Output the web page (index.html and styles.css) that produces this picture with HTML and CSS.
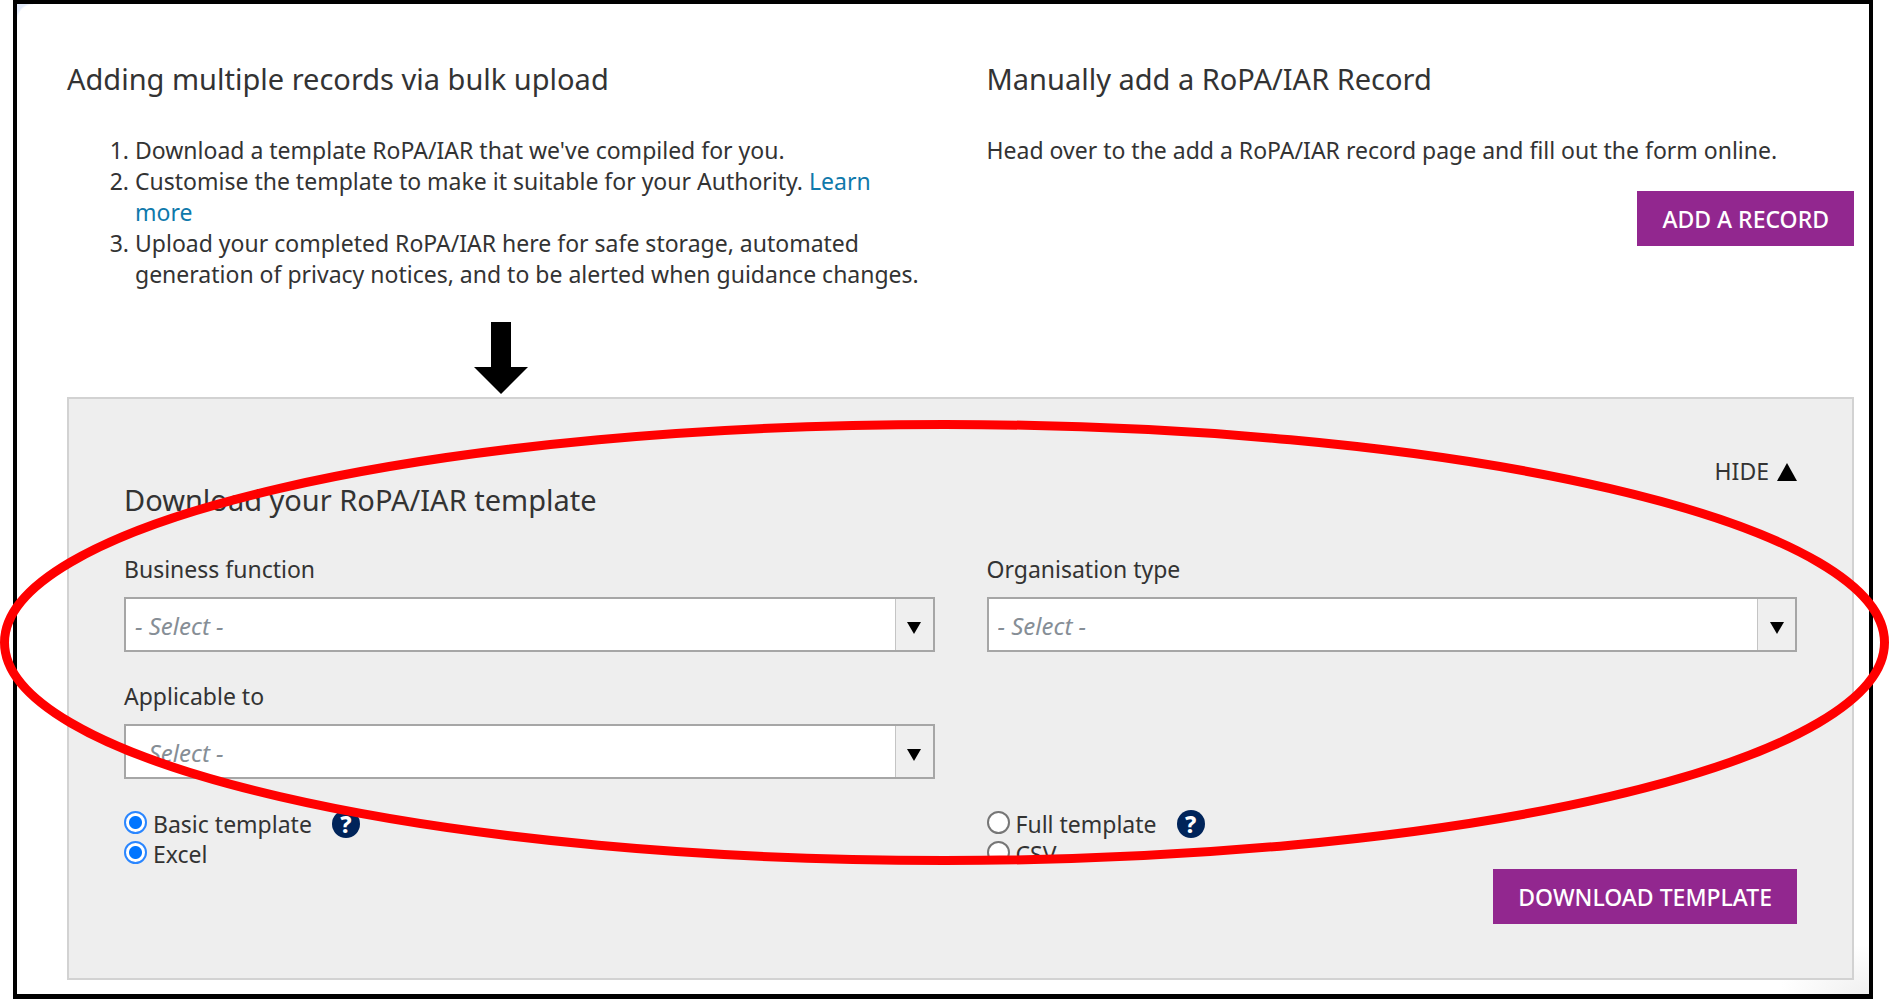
FILE: index.html
```html
<!DOCTYPE html>
<html lang="en">
	<head>
		<meta charset="UTF-8">
		<meta name="viewport" content="width=device-width, initial-scale=1.0">
		<title>Add RoPA/IAR records</title>
		<link rel="stylesheet" href="styles.css">
	</head>

	<body>
		<div class="frame">
			<div class="columns">
				<div class="bulk">
					<h2>Adding multiple records via bulk upload</h2>
					<ol>
						<li>Download a template RoPA/IAR that we've compiled for you.</li>
						<li>Customise the template to make it suitable for your Authority. <a href="#">Learn more</a></li>
						<li>Upload your completed RoPA/IAR here for safe storage, automated generation of privacy notices, and to be alerted when guidance changes.</li>
					</ol>
					<svg class="down-arrow" viewBox="0 0 54 72" aria-hidden="true">
						<path d="M17 0h20v45h17L27 72 0 45h17z"/>
					</svg>
				</div>
				<div class="manual">
					<h2>Manually add a RoPA/IAR Record</h2>
					<p>Head over to the add a RoPA/IAR record page and fill out the form online.</p>
					<button type="button" class="btn">ADD A RECORD</button>
				</div>
			</div>

			<form class="panel">
				<div class="panel-head">
					<h2>Download your RoPA/IAR template</h2>
					<button type="button" class="hide">HIDE
						<svg viewBox="0 0 20 18" aria-hidden="true"><path d="M10 0l10 18H0z"/></svg>
					</button>
				</div>

				<div class="columns fields">
					<div class="field">
						<label for="business">Business function</label>
						<div class="select-box">
							<select id="business"><option>- Select -</option></select>
							<span class="caret"><svg viewBox="0 0 14 12" aria-hidden="true"><path d="M0 0h14L7 12z"/></svg></span>
						</div>
					</div>
					<div class="field">
						<label for="organisation">Organisation type</label>
						<div class="select-box">
							<select id="organisation"><option>- Select -</option></select>
							<span class="caret"><svg viewBox="0 0 14 12" aria-hidden="true"><path d="M0 0h14L7 12z"/></svg></span>
						</div>
					</div>
					<div class="field">
						<label for="applicable">Applicable to</label>
						<div class="select-box">
							<select id="applicable"><option>- Select -</option></select>
							<span class="caret"><svg viewBox="0 0 14 12" aria-hidden="true"><path d="M0 0h14L7 12z"/></svg></span>
						</div>
					</div>
				</div>

				<div class="columns radios">
					<div class="radio">
						<input type="radio" name="template" id="basic" checked>
						<label for="basic">Basic template</label>
						<button type="button" class="help" aria-label="About the basic template">?</button>
					</div>
					<div class="radio">
						<input type="radio" name="template" id="full">
						<label for="full">Full template</label>
						<button type="button" class="help" aria-label="About the full template">?</button>
					</div>
					<div class="radio">
						<input type="radio" name="format" id="excel" checked>
						<label for="excel">Excel</label>
					</div>
					<div class="radio">
						<input type="radio" name="format" id="csv">
						<label for="csv">CSV</label>
					</div>
				</div>
				<button type="button" class="btn">DOWNLOAD TEMPLATE</button>

				<!-- red ring round the form -->
				<svg class="ring" viewBox="0 0 1889 445" preserveAspectRatio="none" aria-hidden="true">
					<ellipse cx="944.5" cy="222.5" rx="940" ry="218"/>
				</svg>
			</form>
		</div>
	</body>
</html>
```
FILE: styles.css
```css
* {
	box-sizing: border-box;
}
body {
	margin: 0;
	background: #fff;
	color: #333;
	font-family: "Noto Sans", "Open Sans", sans-serif;
	font-size: 23px;
	line-height: 31px;
}
.frame {
	min-height: 100vh;
	margin: 0 16px 0 13px;
	padding: 55px 15px 14px 50px;
	border: 4px solid #000;
	border-bottom-width: 5px;
	background:
		radial-gradient(circle at 16px 16px, transparent 15px, #e3ebfb 17px) top left / 16px 16px no-repeat,
		radial-gradient(ellipse at bottom right, #f0f0f0, #fff 70%) bottom right / 90px 50px no-repeat;
}
.columns {
	display: grid;
	grid-template-columns: 1fr 1fr;
	column-gap: 52px;
}
h2 {
	margin: 0;
	font-size: 29px;
	font-weight: 400;
	line-height: 40px;
}
ol {
	margin: 36px 0 32px;
	padding: 0 8px 0 68px;
}
a {
	color: #0f79ab;
	text-decoration: none;
}
p {
	margin: 36px 0 25px;
}
.down-arrow {
	display: block;
	width: 54px;
	height: 72px;
	margin: 0 auto 3px;
}
.btn {
	display: block;
	height: 55px;
	margin-left: auto;
	padding: 0 25px;
	border: 0;
	background: #92278f;
	color: #fff;
	font-family: inherit;
	font-size: 23px;
	font-weight: 500;
	cursor: pointer;
}

.panel {
	position: relative;
	padding: 57px 55px 54px;
	border: 2px solid #d2d2d2;
	background: #eee;
}
.panel-head {
	display: flex;
	justify-content: space-between;
	align-items: flex-start;
}
.panel-head h2 {
	margin-top: 24px;
}
.hide {
	display: flex;
	align-items: center;
	gap: 8px;
	padding: 0;
	border: 0;
	background: none;
	color: inherit;
	font: inherit;
	cursor: pointer;
}
.hide svg {
	width: 20px;
	height: 18px;
	fill: #000;
}
.fields {
	row-gap: 29px;
	margin-top: 34px;
}
.field label {
	display: block;
	margin-bottom: 12px;
}
.select-box {
	display: flex;
	height: 55px;
	border: 2px solid #a6a6a6;
	background: #fff;
}
.select-box select {
	flex: 1;
	min-width: 0;
	padding: 2px 9px 0;
	border: 0;
	background: none;
	color: #868e96;
	font: inherit;
	font-size: 24px;
	font-style: italic;
	appearance: none;
}
.caret {
	display: flex;
	align-items: center;
	justify-content: center;
	width: 38px;
	padding-top: 6px;
	border-left: 1px solid #c4c4c4;
	background: #efefef;
}
.caret svg {
	width: 14px;
	height: 12px;
}

.radios {
	margin-top: 30px;
	line-height: 30px;
}
.radio {
	display: flex;
	align-items: center;
	height: 30px;
}
.radio input {
	appearance: none;
	width: 23px;
	height: 23px;
	margin: 0 6px 4px 0;
	border: 2px solid #767676;
	border-radius: 50%;
	background: #fff;
}
.radio input:checked {
	border-color: #2a86ff;
	background: radial-gradient(circle, #0075ff 6px, #fff 7px);
}
.help {
	width: 28px;
	height: 28px;
	margin-left: 20px;
	padding: 0;
	border: 0;
	border-radius: 50%;
	background: #00245a;
	color: #fff;
	font-family: inherit;
	font-size: 23px;
	font-weight: 800;
	line-height: 28px;
	cursor: pointer;
}

.ring {
	position: absolute;
	top: 21px;
	left: -69px;
	width: calc(100% + 106px);
	height: 445px;
	pointer-events: none;
}
.ring ellipse {
	fill: none;
	stroke: #f00;
	stroke-width: 9px;
	vector-effect: non-scaling-stroke;
}
```
